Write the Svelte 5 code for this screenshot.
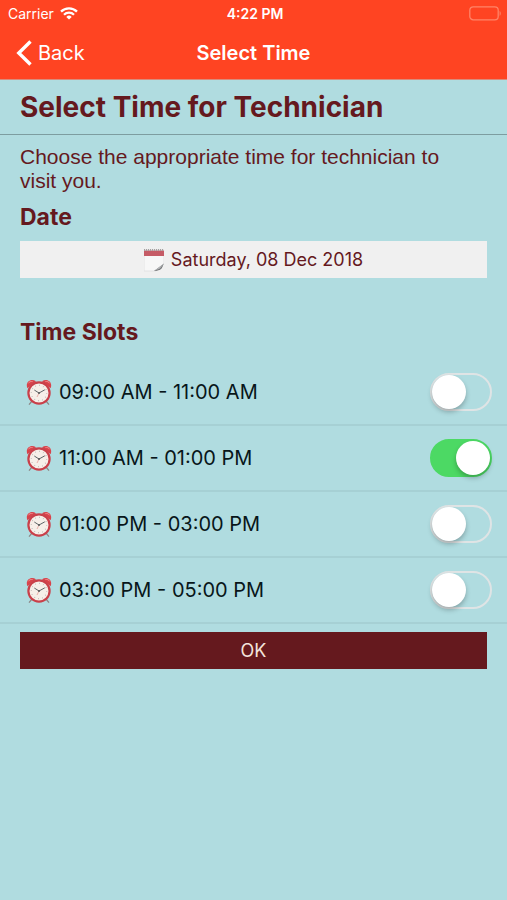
<script>
  let date = $state('Saturday, 08 Dec 2018');
  let slots = $state([
    { id: 'slot-1', label: '09:00 AM - 11:00 AM', selected: false },
    { id: 'slot-2', label: '11:00 AM - 01:00 PM', selected: true },
    { id: 'slot-3', label: '01:00 PM - 03:00 PM', selected: false },
    { id: 'slot-4', label: '03:00 PM - 05:00 PM', selected: false }
  ]);

  // only one slot can be booked at a time
  function selectSlot(id, checked) {
    for (const slot of slots) {
      slot.selected = slot.id === id ? checked : false;
    }
  }
</script>

<header>
  <div class="status">
    <div class="carrier">
      <span>Carrier</span>
      <svg width="18" height="13" viewBox="0 0 18 13" fill="none" stroke="#fff" stroke-width="2.3" aria-hidden="true">
        <path d="M1 4.6a11.3 11.3 0 0 1 16 0" />
        <path d="M4 7.7a7.1 7.1 0 0 1 10 0" />
        <path d="M9 12.6 6.3 9.9a3.8 3.8 0 0 1 5.4 0z" fill="#fff" stroke="none" />
      </svg>
    </div>
    <strong>4:22 PM</strong>
    <svg class="battery" width="33" height="15" viewBox="0 0 33 15" aria-hidden="true">
      <rect x="0.8" y="0.8" width="28.4" height="13" rx="3.4" fill="none" stroke="#ff8468" stroke-width="1.3" />
      <path d="M30.6 5v4.8c1.5-.5 1.5-4.3 0-4.8z" fill="#ff8468" />
    </svg>
  </div>
  <nav>
    <button class="back" type="button">
      <svg width="16" height="26" viewBox="0 0 16 26" aria-hidden="true">
        <path d="M14.500 1.500 2.800 13l11.700 11.500" fill="none" stroke="#fff" stroke-width="3.4" />
      </svg>
      Back
    </button>
    <span class="title">Select Time</span>
  </nav>
</header>

<main>
  <h1>Select Time for Technician</h1>

  <section class="intro">
    <p>Choose the appropriate time for technician to visit you.</p>
    <h2>Date</h2>
    <button class="date" type="button">
      <svg width="20" height="24" viewBox="1 0 20 24" aria-hidden="true">
        <path d="M1 1h20v22H1z" fill="#f7f7f7" />
        <path d="M1 8v15h12M21 8v8" fill="none" stroke="#dededf" stroke-width="0.8" />
        <path d="M1 2.5h20V8H1z" fill="#c55b66" />
        <path d="M1 2h20" stroke="#a4a0a0" stroke-width="2" stroke-dasharray="1.2 0.8" />
        <path d="M21 15.5 11 23c4 .3 7-1 8-3z" fill="#77797b" />
        <path d="M21 15.5 11 23l6-2.5z" fill="#b4b6b8" />
        <path d="M21 16v7h-9c5 0 8-2 9-7z" fill="#f0f0f0" />
      </svg>
      {date}
    </button>
  </section>

  <h2 class="slots-title">Time Slots</h2>
  <ul>
    {#each slots as slot (slot.id)}
      <li>
        <label for={slot.id}>
          <svg width="26" height="27" viewBox="0 0 26 27" aria-hidden="true">
            <path d="m6 22-3 3.6M20 22l3 3.6" stroke="#8b8584" stroke-width="1.2" />
            <path d="M1.400 9.200C-1 3.400 4.500-1.400 10 2.200zM24.600 9.200c2.400-5.800-3.100-10.600-8.600-7z" fill="#d8434b" />
            <path d="M2.200 4.400c1-1.600 2.600-2.200 4.400-1.900M19.400 2.500c1.800-.3 3.400.3 4.400 1.900" fill="none" stroke="#f08d8d" />
            <circle cx="13" cy="14" r="10.600" fill="#f6efe9" stroke="#c9404a" stroke-width="2.200" />
            <circle cx="13" cy="14" r="7.700" fill="none" stroke="#a8a3a1" stroke-width="1.200" stroke-dasharray="0.600 3.430" />
            <path d="M8.300 11 13 14l5.800-3.200" fill="none" stroke="#5f6668" />
            <path d="m13 14-2 4" stroke="#df8780" stroke-width="0.600" />
            <circle cx="13" cy="14" r="1" fill="#56585a" />
          </svg>
          {slot.label}
        </label>
        <input
          id={slot.id}
          type="checkbox"
          role="switch"
          checked={slot.selected}
          onchange={(e) => selectSlot(slot.id, e.currentTarget.checked)}
        />
      </li>
    {/each}
  </ul>

  <div class="actions">
    <button class="ok" type="button">OK</button>
  </div>
</main>

<style>
  :global(body) {
    margin: 0;
    background: #b0dce0;
  }

  header,
  main {
    font-family: Inter, 'Liberation Sans', sans-serif;
  }

  header {
    background: #ff4422;
    color: #fff;
    border-bottom: 1px solid #d98c7b;
  }

  button {
    border: 0;
    font-family: inherit;
    cursor: pointer;
  }

  .status {
    display: grid;
    grid-template-columns: 1fr auto 1fr;
    align-items: center;
    height: 27px;
    padding: 0 5px 0 8px;
    font-size: 14px;
  }

  .status strong {
    font-weight: 600;
  }

  .carrier {
    display: flex;
    align-items: center;
    gap: 6px;
  }

  .battery {
    justify-self: end;
  }

  nav {
    display: grid;
    grid-template-columns: 1fr auto 1fr;
    align-items: center;
    height: 52px;
    padding: 0 16px;
    font-size: 20px;
  }

  .back {
    display: flex;
    align-items: center;
    justify-self: start;
    gap: 6px;
    padding: 0;
    background: none;
    color: #fff;
    font-size: 20px;
  }

  .title {
    font-weight: 600;
  }

  h1,
  h2,
  p {
    margin: 0;
    color: #65191e;
  }

  h1 {
    padding: 8px 20px;
    border-bottom: 1px solid #7d9da0;
    font-size: 28px;
    font-weight: 700;
    line-height: 38px;
  }

  h2 {
    font-size: 23px;
    font-weight: 700;
    line-height: 28px;
  }

  .intro {
    padding: 10px 20px 0;
  }

  p {
    margin-bottom: 10px;
    padding-right: 20px;
    font-family: 'Liberation Sans', Arial, sans-serif;
    font-size: 21px;
    line-height: 24px;
  }

  .date,
  .ok {
    display: flex;
    align-items: center;
    justify-content: center;
    gap: 7px;
    width: 100%;
    height: 37px;
    padding: 0;
    font-size: 18px;
  }

  .date {
    margin-top: 10px;
    background: #f0f0f0;
    color: #65191e;
  }

  .slots-title {
    padding: 40px 20px 14px;
  }

  ul {
    margin: 0;
    padding: 0;
    list-style: none;
  }

  li {
    display: flex;
    align-items: center;
    justify-content: space-between;
    height: 64px;
    padding: 0 15px 0 26px;
    border-bottom: 2px solid #a6d0d4;
  }

  label {
    display: flex;
    align-items: center;
    gap: 7px;
    color: #08161a;
    font-size: 20px;
  }

  input {
    display: flex;
    align-items: center;
    box-sizing: border-box;
    width: 62px;
    height: 38px;
    margin: 0;
    padding: 0;
    appearance: none;
    border: 2px solid #dfe4e5;
    border-radius: 19px;
    cursor: pointer;
  }

  input::before {
    content: '';
    width: 34px;
    height: 34px;
    border-radius: 50%;
    background: #fff;
    box-shadow: 0 3px 5px rgba(0, 0, 0, 0.25);
  }

  input:checked {
    justify-content: flex-end;
    border-color: #4cd964;
    background: #4cd964;
  }

  .actions {
    padding: 8px 20px;
  }

  .ok {
    background: #65191e;
    color: #f3e3dc;
  }
</style>
